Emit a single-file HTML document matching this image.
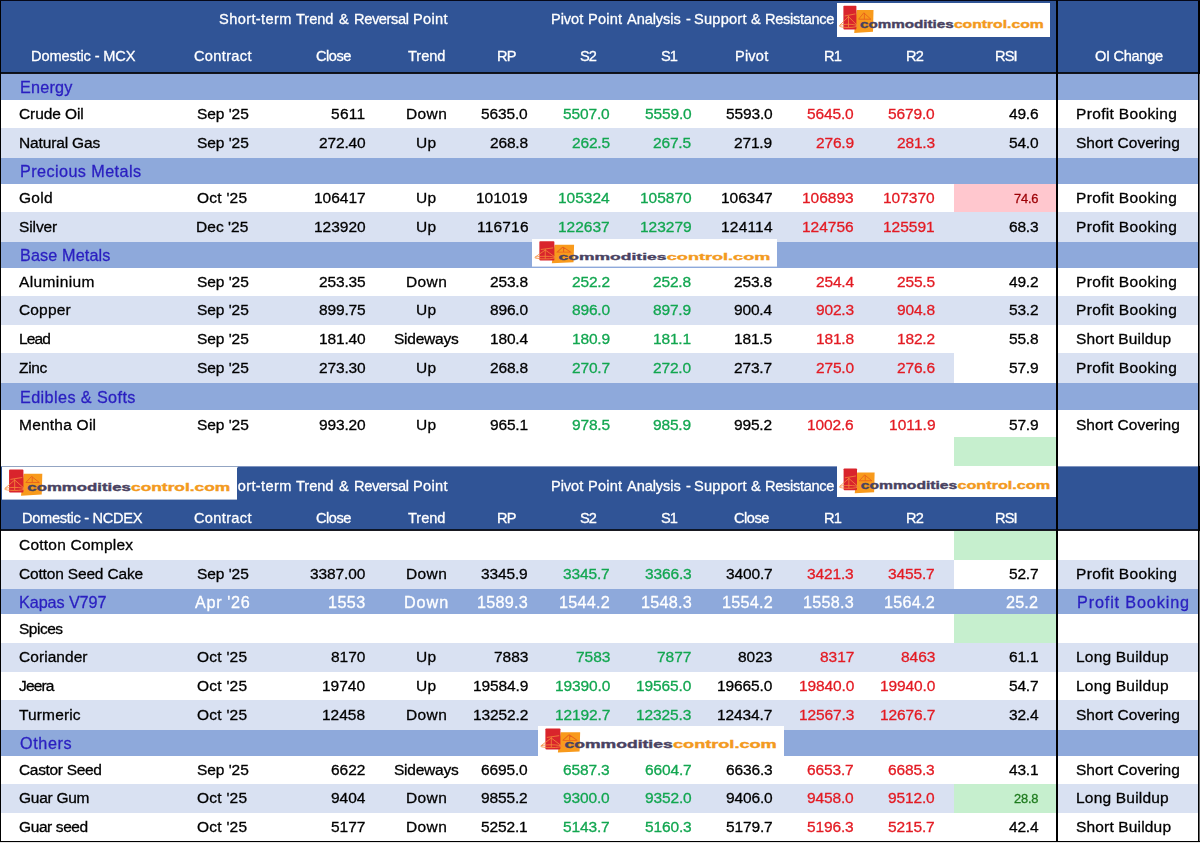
<!DOCTYPE html>
<html><head><meta charset="utf-8"><title>Commodities Technical Levels</title>
<style>
html,body{margin:0;padding:0;background:#fff}
body{width:1200px;height:843px;position:relative;overflow:hidden;font-family:"Liberation Sans",sans-serif}
.b{position:absolute;display:block}
.t{position:absolute;white-space:pre;display:block;will-change:transform;-webkit-text-stroke:0.3px currentColor}
</style></head><body>
<div class="b" style="left:0px;top:0px;width:1200px;height:73px;background:#305496"></div>
<div class="b" style="left:0px;top:74px;width:1200px;height:26px;background:#8EA9DB"></div>
<span class="t" style="left:19.50px;top:74.3px;height:26px;line-height:26px;font-size:16.2px;color:#2A1FC0;letter-spacing:0.216px">Energy</span>
<div class="b" style="left:0px;top:100px;width:1200px;height:28.3px;background:#FFFFFF"></div>
<span class="t" style="left:19.00px;top:100px;height:28.3px;line-height:28.3px;font-size:15.5px;color:#000000;letter-spacing:-0.090px">Crude Oil</span>
<span class="t" style="left:196.62px;top:100px;height:28.3px;line-height:28.3px;font-size:15.5px;color:#000000;letter-spacing:-0.053px">Sep &#x27;25</span>
<span class="t" style="left:331.10px;top:100px;height:28.3px;line-height:28.3px;font-size:15.5px;color:#000000;letter-spacing:0.291px">5611</span>
<span class="t" style="left:405.59px;top:100px;height:28.3px;line-height:28.3px;font-size:15.5px;color:#000000;letter-spacing:0.397px">Down</span>
<span class="t" style="left:481.37px;top:100px;height:28.3px;line-height:28.3px;font-size:15.5px;color:#000000;letter-spacing:-0.136px">5635.0</span>
<span class="t" style="left:563.37px;top:100px;height:28.3px;line-height:28.3px;font-size:15.5px;color:#12A650;letter-spacing:-0.136px">5507.0</span>
<span class="t" style="left:644.87px;top:100px;height:28.3px;line-height:28.3px;font-size:15.5px;color:#12A650;letter-spacing:-0.136px">5559.0</span>
<span class="t" style="left:725.87px;top:100px;height:28.3px;line-height:28.3px;font-size:15.5px;color:#000000;letter-spacing:-0.136px">5593.0</span>
<span class="t" style="left:807.37px;top:100px;height:28.3px;line-height:28.3px;font-size:15.5px;color:#E31B23;letter-spacing:-0.136px">5645.0</span>
<span class="t" style="left:888.37px;top:100px;height:28.3px;line-height:28.3px;font-size:15.5px;color:#E31B23;letter-spacing:-0.136px">5679.0</span>
<span class="t" style="left:1008.85px;top:100px;height:28.3px;line-height:28.3px;font-size:15.5px;color:#000000;letter-spacing:-0.206px">49.6</span>
<span class="t" style="left:1076.40px;top:100px;height:28.3px;line-height:28.3px;font-size:15.5px;color:#000000;letter-spacing:0.338px">Profit Booking</span>
<div class="b" style="left:0px;top:128.3px;width:1200px;height:29.5px;background:#D9E1F2"></div>
<span class="t" style="left:19.00px;top:127.9px;height:29.5px;line-height:29.5px;font-size:15.5px;color:#000000;letter-spacing:-0.144px">Natural Gas</span>
<span class="t" style="left:196.62px;top:127.9px;height:29.5px;line-height:29.5px;font-size:15.5px;color:#000000;letter-spacing:-0.053px">Sep &#x27;25</span>
<span class="t" style="left:318.57px;top:127.9px;height:29.5px;line-height:29.5px;font-size:15.5px;color:#000000;letter-spacing:-0.136px">272.40</span>
<span class="t" style="left:415.95px;top:127.9px;height:29.5px;line-height:29.5px;font-size:15.5px;color:#000000;letter-spacing:0.293px">Up</span>
<span class="t" style="left:489.97px;top:127.9px;height:29.5px;line-height:29.5px;font-size:15.5px;color:#000000;letter-spacing:-0.164px">268.8</span>
<span class="t" style="left:571.97px;top:127.9px;height:29.5px;line-height:29.5px;font-size:15.5px;color:#12A650;letter-spacing:-0.164px">262.5</span>
<span class="t" style="left:653.47px;top:127.9px;height:29.5px;line-height:29.5px;font-size:15.5px;color:#12A650;letter-spacing:-0.164px">267.5</span>
<span class="t" style="left:734.47px;top:127.9px;height:29.5px;line-height:29.5px;font-size:15.5px;color:#000000;letter-spacing:-0.164px">271.9</span>
<span class="t" style="left:815.97px;top:127.9px;height:29.5px;line-height:29.5px;font-size:15.5px;color:#E31B23;letter-spacing:-0.164px">276.9</span>
<span class="t" style="left:896.97px;top:127.9px;height:29.5px;line-height:29.5px;font-size:15.5px;color:#E31B23;letter-spacing:-0.164px">281.3</span>
<span class="t" style="left:1008.85px;top:127.9px;height:29.5px;line-height:29.5px;font-size:15.5px;color:#000000;letter-spacing:-0.206px">54.0</span>
<span class="t" style="left:1076.40px;top:127.9px;height:29.5px;line-height:29.5px;font-size:15.5px;color:#000000;letter-spacing:0.032px">Short Covering</span>
<div class="b" style="left:0px;top:157.8px;width:1200px;height:26.2px;background:#8EA9DB"></div>
<span class="t" style="left:19.50px;top:158.1px;height:26.2px;line-height:26.2px;font-size:16.2px;color:#2A1FC0;letter-spacing:0.418px">Precious Metals</span>
<div class="b" style="left:0px;top:184px;width:1200px;height:28.4px;background:#FFFFFF"></div>
<div class="b" style="left:954px;top:184px;width:102px;height:28.4px;background:#FFC7CE"></div>
<span class="t" style="left:19.00px;top:184px;height:28.4px;line-height:28.4px;font-size:15.5px;color:#000000;letter-spacing:0.255px">Gold</span>
<span class="t" style="left:197.46px;top:184px;height:28.4px;line-height:28.4px;font-size:15.5px;color:#000000;letter-spacing:0.243px">Oct &#x27;25</span>
<span class="t" style="left:313.56px;top:184px;height:28.4px;line-height:28.4px;font-size:15.5px;color:#000000;letter-spacing:0.004px">106417</span>
<span class="t" style="left:415.95px;top:184px;height:28.4px;line-height:28.4px;font-size:15.5px;color:#000000;letter-spacing:0.293px">Up</span>
<span class="t" style="left:476.36px;top:184px;height:28.4px;line-height:28.4px;font-size:15.5px;color:#000000;letter-spacing:0.004px">101019</span>
<span class="t" style="left:558.36px;top:184px;height:28.4px;line-height:28.4px;font-size:15.5px;color:#12A650;letter-spacing:0.004px">105324</span>
<span class="t" style="left:639.86px;top:184px;height:28.4px;line-height:28.4px;font-size:15.5px;color:#12A650;letter-spacing:0.004px">105870</span>
<span class="t" style="left:720.86px;top:184px;height:28.4px;line-height:28.4px;font-size:15.5px;color:#000000;letter-spacing:0.004px">106347</span>
<span class="t" style="left:802.36px;top:184px;height:28.4px;line-height:28.4px;font-size:15.5px;color:#E31B23;letter-spacing:0.004px">106893</span>
<span class="t" style="left:883.36px;top:184px;height:28.4px;line-height:28.4px;font-size:15.5px;color:#E31B23;letter-spacing:0.004px">107370</span>
<span class="t" style="left:1013.97px;top:184.5px;height:28.4px;line-height:28.4px;font-size:12.9px;color:#9C0006;letter-spacing:-0.225px">74.6</span>
<span class="t" style="left:1076.40px;top:184px;height:28.4px;line-height:28.4px;font-size:15.5px;color:#000000;letter-spacing:0.338px">Profit Booking</span>
<div class="b" style="left:0px;top:212.4px;width:1200px;height:29.2px;background:#D9E1F2"></div>
<span class="t" style="left:19.00px;top:212.4px;height:29.2px;line-height:29.2px;font-size:15.5px;color:#000000;letter-spacing:-0.103px">Silver</span>
<span class="t" style="left:196.32px;top:212.4px;height:29.2px;line-height:29.2px;font-size:15.5px;color:#000000;letter-spacing:0.049px">Dec &#x27;25</span>
<span class="t" style="left:313.56px;top:212.4px;height:29.2px;line-height:29.2px;font-size:15.5px;color:#000000;letter-spacing:0.004px">123920</span>
<span class="t" style="left:415.95px;top:212.4px;height:29.2px;line-height:29.2px;font-size:15.5px;color:#000000;letter-spacing:0.293px">Up</span>
<span class="t" style="left:476.55px;top:212.4px;height:29.2px;line-height:29.2px;font-size:15.5px;color:#000000;letter-spacing:0.195px">116716</span>
<span class="t" style="left:558.36px;top:212.4px;height:29.2px;line-height:29.2px;font-size:15.5px;color:#12A650;letter-spacing:0.004px">122637</span>
<span class="t" style="left:639.86px;top:212.4px;height:29.2px;line-height:29.2px;font-size:15.5px;color:#12A650;letter-spacing:0.004px">123279</span>
<span class="t" style="left:721.05px;top:212.4px;height:29.2px;line-height:29.2px;font-size:15.5px;color:#000000;letter-spacing:0.195px">124114</span>
<span class="t" style="left:802.36px;top:212.4px;height:29.2px;line-height:29.2px;font-size:15.5px;color:#E31B23;letter-spacing:0.004px">124756</span>
<span class="t" style="left:883.36px;top:212.4px;height:29.2px;line-height:29.2px;font-size:15.5px;color:#E31B23;letter-spacing:0.004px">125591</span>
<span class="t" style="left:1008.85px;top:212.4px;height:29.2px;line-height:29.2px;font-size:15.5px;color:#000000;letter-spacing:-0.206px">68.3</span>
<span class="t" style="left:1076.40px;top:212.4px;height:29.2px;line-height:29.2px;font-size:15.5px;color:#000000;letter-spacing:0.338px">Profit Booking</span>
<div class="b" style="left:0px;top:241.6px;width:1200px;height:26px;background:#8EA9DB"></div>
<span class="t" style="left:19.50px;top:241.9px;height:26px;line-height:26px;font-size:16.2px;color:#2A1FC0;letter-spacing:0.137px">Base Metals</span>
<div class="b" style="left:0px;top:267.6px;width:1200px;height:28.8px;background:#FFFFFF"></div>
<span class="t" style="left:19.00px;top:267.6px;height:28.8px;line-height:28.8px;font-size:15.5px;color:#000000;letter-spacing:0.381px">Aluminium</span>
<span class="t" style="left:196.62px;top:267.6px;height:28.8px;line-height:28.8px;font-size:15.5px;color:#000000;letter-spacing:-0.053px">Sep &#x27;25</span>
<span class="t" style="left:318.57px;top:267.6px;height:28.8px;line-height:28.8px;font-size:15.5px;color:#000000;letter-spacing:-0.136px">253.35</span>
<span class="t" style="left:405.59px;top:267.6px;height:28.8px;line-height:28.8px;font-size:15.5px;color:#000000;letter-spacing:0.397px">Down</span>
<span class="t" style="left:489.97px;top:267.6px;height:28.8px;line-height:28.8px;font-size:15.5px;color:#000000;letter-spacing:-0.164px">253.8</span>
<span class="t" style="left:571.97px;top:267.6px;height:28.8px;line-height:28.8px;font-size:15.5px;color:#12A650;letter-spacing:-0.164px">252.2</span>
<span class="t" style="left:653.47px;top:267.6px;height:28.8px;line-height:28.8px;font-size:15.5px;color:#12A650;letter-spacing:-0.164px">252.8</span>
<span class="t" style="left:734.47px;top:267.6px;height:28.8px;line-height:28.8px;font-size:15.5px;color:#000000;letter-spacing:-0.164px">253.8</span>
<span class="t" style="left:815.97px;top:267.6px;height:28.8px;line-height:28.8px;font-size:15.5px;color:#E31B23;letter-spacing:-0.164px">254.4</span>
<span class="t" style="left:896.97px;top:267.6px;height:28.8px;line-height:28.8px;font-size:15.5px;color:#E31B23;letter-spacing:-0.164px">255.5</span>
<span class="t" style="left:1008.85px;top:267.6px;height:28.8px;line-height:28.8px;font-size:15.5px;color:#000000;letter-spacing:-0.206px">49.2</span>
<span class="t" style="left:1076.40px;top:267.6px;height:28.8px;line-height:28.8px;font-size:15.5px;color:#000000;letter-spacing:0.338px">Profit Booking</span>
<div class="b" style="left:0px;top:296.4px;width:1200px;height:28.6px;background:#D9E1F2"></div>
<span class="t" style="left:19.00px;top:296.4px;height:28.6px;line-height:28.6px;font-size:15.5px;color:#000000;letter-spacing:0.152px">Copper</span>
<span class="t" style="left:196.62px;top:296.4px;height:28.6px;line-height:28.6px;font-size:15.5px;color:#000000;letter-spacing:-0.053px">Sep &#x27;25</span>
<span class="t" style="left:318.57px;top:296.4px;height:28.6px;line-height:28.6px;font-size:15.5px;color:#000000;letter-spacing:-0.136px">899.75</span>
<span class="t" style="left:415.95px;top:296.4px;height:28.6px;line-height:28.6px;font-size:15.5px;color:#000000;letter-spacing:0.293px">Up</span>
<span class="t" style="left:489.97px;top:296.4px;height:28.6px;line-height:28.6px;font-size:15.5px;color:#000000;letter-spacing:-0.164px">896.0</span>
<span class="t" style="left:571.97px;top:296.4px;height:28.6px;line-height:28.6px;font-size:15.5px;color:#12A650;letter-spacing:-0.164px">896.0</span>
<span class="t" style="left:653.47px;top:296.4px;height:28.6px;line-height:28.6px;font-size:15.5px;color:#12A650;letter-spacing:-0.164px">897.9</span>
<span class="t" style="left:734.47px;top:296.4px;height:28.6px;line-height:28.6px;font-size:15.5px;color:#000000;letter-spacing:-0.164px">900.4</span>
<span class="t" style="left:815.97px;top:296.4px;height:28.6px;line-height:28.6px;font-size:15.5px;color:#E31B23;letter-spacing:-0.164px">902.3</span>
<span class="t" style="left:896.97px;top:296.4px;height:28.6px;line-height:28.6px;font-size:15.5px;color:#E31B23;letter-spacing:-0.164px">904.8</span>
<span class="t" style="left:1008.85px;top:296.4px;height:28.6px;line-height:28.6px;font-size:15.5px;color:#000000;letter-spacing:-0.206px">53.2</span>
<span class="t" style="left:1076.40px;top:296.4px;height:28.6px;line-height:28.6px;font-size:15.5px;color:#000000;letter-spacing:0.338px">Profit Booking</span>
<div class="b" style="left:0px;top:325px;width:1200px;height:28.4px;background:#FFFFFF"></div>
<span class="t" style="left:18.91px;top:325px;height:28.4px;line-height:28.4px;font-size:15.5px;color:#000000;letter-spacing:-0.900px">Lead</span>
<span class="t" style="left:196.62px;top:325px;height:28.4px;line-height:28.4px;font-size:15.5px;color:#000000;letter-spacing:-0.053px">Sep &#x27;25</span>
<span class="t" style="left:318.57px;top:325px;height:28.4px;line-height:28.4px;font-size:15.5px;color:#000000;letter-spacing:-0.136px">181.40</span>
<span class="t" style="left:393.68px;top:325px;height:28.4px;line-height:28.4px;font-size:15.5px;color:#000000;letter-spacing:-0.242px">Sideways</span>
<span class="t" style="left:489.97px;top:325px;height:28.4px;line-height:28.4px;font-size:15.5px;color:#000000;letter-spacing:-0.164px">180.4</span>
<span class="t" style="left:571.97px;top:325px;height:28.4px;line-height:28.4px;font-size:15.5px;color:#12A650;letter-spacing:-0.164px">180.9</span>
<span class="t" style="left:653.47px;top:325px;height:28.4px;line-height:28.4px;font-size:15.5px;color:#12A650;letter-spacing:-0.164px">181.1</span>
<span class="t" style="left:734.47px;top:325px;height:28.4px;line-height:28.4px;font-size:15.5px;color:#000000;letter-spacing:-0.164px">181.5</span>
<span class="t" style="left:815.97px;top:325px;height:28.4px;line-height:28.4px;font-size:15.5px;color:#E31B23;letter-spacing:-0.164px">181.8</span>
<span class="t" style="left:896.97px;top:325px;height:28.4px;line-height:28.4px;font-size:15.5px;color:#E31B23;letter-spacing:-0.164px">182.2</span>
<span class="t" style="left:1008.85px;top:325px;height:28.4px;line-height:28.4px;font-size:15.5px;color:#000000;letter-spacing:-0.206px">55.8</span>
<span class="t" style="left:1076.40px;top:325px;height:28.4px;line-height:28.4px;font-size:15.5px;color:#000000;letter-spacing:0.162px">Short Buildup</span>
<div class="b" style="left:0px;top:353.3px;width:1200px;height:29.6px;background:#D9E1F2"></div>
<div class="b" style="left:954px;top:353.3px;width:102px;height:29.6px;background:#FFFFFF"></div>
<span class="t" style="left:19.00px;top:353.3px;height:29.6px;line-height:29.6px;font-size:15.5px;color:#000000;letter-spacing:-0.343px">Zinc</span>
<span class="t" style="left:196.62px;top:353.3px;height:29.6px;line-height:29.6px;font-size:15.5px;color:#000000;letter-spacing:-0.053px">Sep &#x27;25</span>
<span class="t" style="left:318.57px;top:353.3px;height:29.6px;line-height:29.6px;font-size:15.5px;color:#000000;letter-spacing:-0.136px">273.30</span>
<span class="t" style="left:415.95px;top:353.3px;height:29.6px;line-height:29.6px;font-size:15.5px;color:#000000;letter-spacing:0.293px">Up</span>
<span class="t" style="left:489.97px;top:353.3px;height:29.6px;line-height:29.6px;font-size:15.5px;color:#000000;letter-spacing:-0.164px">268.8</span>
<span class="t" style="left:571.97px;top:353.3px;height:29.6px;line-height:29.6px;font-size:15.5px;color:#12A650;letter-spacing:-0.164px">270.7</span>
<span class="t" style="left:653.47px;top:353.3px;height:29.6px;line-height:29.6px;font-size:15.5px;color:#12A650;letter-spacing:-0.164px">272.0</span>
<span class="t" style="left:734.47px;top:353.3px;height:29.6px;line-height:29.6px;font-size:15.5px;color:#000000;letter-spacing:-0.164px">273.7</span>
<span class="t" style="left:815.97px;top:353.3px;height:29.6px;line-height:29.6px;font-size:15.5px;color:#E31B23;letter-spacing:-0.164px">275.0</span>
<span class="t" style="left:896.97px;top:353.3px;height:29.6px;line-height:29.6px;font-size:15.5px;color:#E31B23;letter-spacing:-0.164px">276.6</span>
<span class="t" style="left:1008.85px;top:353.3px;height:29.6px;line-height:29.6px;font-size:15.5px;color:#000000;letter-spacing:-0.206px">57.9</span>
<span class="t" style="left:1076.40px;top:353.3px;height:29.6px;line-height:29.6px;font-size:15.5px;color:#000000;letter-spacing:0.338px">Profit Booking</span>
<div class="b" style="left:0px;top:382.9px;width:1200px;height:27.3px;background:#8EA9DB"></div>
<span class="t" style="left:19.50px;top:383.8px;height:27.3px;line-height:27.3px;font-size:16.2px;color:#2A1FC0;letter-spacing:0.403px">Edibles &amp; Softs</span>
<div class="b" style="left:0px;top:410.2px;width:1200px;height:27px;background:#FFFFFF"></div>
<span class="t" style="left:19.00px;top:411.2px;height:27px;line-height:27px;font-size:15.5px;color:#000000;letter-spacing:0.229px">Mentha Oil</span>
<span class="t" style="left:196.62px;top:411.2px;height:27px;line-height:27px;font-size:15.5px;color:#000000;letter-spacing:-0.053px">Sep &#x27;25</span>
<span class="t" style="left:318.57px;top:411.2px;height:27px;line-height:27px;font-size:15.5px;color:#000000;letter-spacing:-0.136px">993.20</span>
<span class="t" style="left:415.95px;top:411.2px;height:27px;line-height:27px;font-size:15.5px;color:#000000;letter-spacing:0.293px">Up</span>
<span class="t" style="left:489.97px;top:411.2px;height:27px;line-height:27px;font-size:15.5px;color:#000000;letter-spacing:-0.164px">965.1</span>
<span class="t" style="left:571.97px;top:411.2px;height:27px;line-height:27px;font-size:15.5px;color:#12A650;letter-spacing:-0.164px">978.5</span>
<span class="t" style="left:653.47px;top:411.2px;height:27px;line-height:27px;font-size:15.5px;color:#12A650;letter-spacing:-0.164px">985.9</span>
<span class="t" style="left:734.47px;top:411.2px;height:27px;line-height:27px;font-size:15.5px;color:#000000;letter-spacing:-0.164px">995.2</span>
<span class="t" style="left:807.37px;top:411.2px;height:27px;line-height:27px;font-size:15.5px;color:#E31B23;letter-spacing:-0.136px">1002.6</span>
<span class="t" style="left:888.56px;top:411.2px;height:27px;line-height:27px;font-size:15.5px;color:#E31B23;letter-spacing:0.056px">1011.9</span>
<span class="t" style="left:1008.85px;top:411.2px;height:27px;line-height:27px;font-size:15.5px;color:#000000;letter-spacing:-0.206px">57.9</span>
<span class="t" style="left:1076.40px;top:411.2px;height:27px;line-height:27px;font-size:15.5px;color:#000000;letter-spacing:0.032px">Short Covering</span>
<div class="b" style="left:0px;top:437.2px;width:1200px;height:29.2px;background:#FFFFFF"></div>
<div class="b" style="left:954px;top:437.2px;width:102px;height:29.2px;background:#C6EFCE"></div>
<div class="b" style="left:0px;top:466.4px;width:1200px;height:63.6px;background:#305496"></div>
<div class="b" style="left:0px;top:466px;width:1200px;height:1px;background:#7E93BF"></div>
<div class="b" style="left:0px;top:530.5px;width:1200px;height:29.4px;background:#FFFFFF"></div>
<div class="b" style="left:954px;top:530.5px;width:102px;height:29.4px;background:#C6EFCE"></div>
<span class="t" style="left:19.00px;top:529.6px;height:29.4px;line-height:29.4px;font-size:15.5px;color:#000;letter-spacing:0.228px">Cotton Complex</span>
<div class="b" style="left:0px;top:559.9px;width:1200px;height:29px;background:#D9E1F2"></div>
<div class="b" style="left:954px;top:559.9px;width:102px;height:29px;background:#FFFFFF"></div>
<span class="t" style="left:19.00px;top:558.9px;height:29px;line-height:29px;font-size:15.5px;color:#000000;letter-spacing:-0.171px">Cotton Seed Cake</span>
<span class="t" style="left:196.62px;top:558.9px;height:29px;line-height:29px;font-size:15.5px;color:#000000;letter-spacing:-0.053px">Sep &#x27;25</span>
<span class="t" style="left:309.97px;top:558.9px;height:29px;line-height:29px;font-size:15.5px;color:#000000;letter-spacing:-0.116px">3387.00</span>
<span class="t" style="left:405.59px;top:558.9px;height:29px;line-height:29px;font-size:15.5px;color:#000000;letter-spacing:0.397px">Down</span>
<span class="t" style="left:481.37px;top:558.9px;height:29px;line-height:29px;font-size:15.5px;color:#000000;letter-spacing:-0.136px">3345.9</span>
<span class="t" style="left:563.37px;top:558.9px;height:29px;line-height:29px;font-size:15.5px;color:#12A650;letter-spacing:-0.136px">3345.7</span>
<span class="t" style="left:644.87px;top:558.9px;height:29px;line-height:29px;font-size:15.5px;color:#12A650;letter-spacing:-0.136px">3366.3</span>
<span class="t" style="left:725.87px;top:558.9px;height:29px;line-height:29px;font-size:15.5px;color:#000000;letter-spacing:-0.136px">3400.7</span>
<span class="t" style="left:807.37px;top:558.9px;height:29px;line-height:29px;font-size:15.5px;color:#E31B23;letter-spacing:-0.136px">3421.3</span>
<span class="t" style="left:888.37px;top:558.9px;height:29px;line-height:29px;font-size:15.5px;color:#E31B23;letter-spacing:-0.136px">3455.7</span>
<span class="t" style="left:1008.85px;top:558.9px;height:29px;line-height:29px;font-size:15.5px;color:#000000;letter-spacing:-0.206px">52.7</span>
<span class="t" style="left:1076.40px;top:558.9px;height:29px;line-height:29px;font-size:15.5px;color:#000000;letter-spacing:0.338px">Profit Booking</span>
<div class="b" style="left:0px;top:588.9px;width:1200px;height:25.2px;background:#8EA9DB"></div>
<span class="t" style="left:19.40px;top:589.7px;height:25.2px;line-height:25.2px;font-size:16.2px;color:#2A1FC0;letter-spacing:-0.086px">Kapas V797</span>
<span class="t" style="left:195.09px;top:589.7px;height:25.2px;line-height:25.2px;font-size:16.2px;color:#FFFFFF;letter-spacing:0.667px">Apr &#x27;26</span>
<span class="t" style="left:327.99px;top:589.7px;height:25.2px;line-height:25.2px;font-size:16.2px;color:#FFFFFF;letter-spacing:0.423px">1553</span>
<span class="t" style="left:403.92px;top:589.7px;height:25.2px;line-height:25.2px;font-size:16.2px;color:#FFFFFF;letter-spacing:0.916px">Down</span>
<span class="t" style="left:477.38px;top:589.7px;height:25.2px;line-height:25.2px;font-size:16.2px;color:#FFFFFF;letter-spacing:0.235px">1589.3</span>
<span class="t" style="left:559.38px;top:589.7px;height:25.2px;line-height:25.2px;font-size:16.2px;color:#FFFFFF;letter-spacing:0.235px">1544.2</span>
<span class="t" style="left:640.88px;top:589.7px;height:25.2px;line-height:25.2px;font-size:16.2px;color:#FFFFFF;letter-spacing:0.235px">1548.3</span>
<span class="t" style="left:721.88px;top:589.7px;height:25.2px;line-height:25.2px;font-size:16.2px;color:#FFFFFF;letter-spacing:0.235px">1554.2</span>
<span class="t" style="left:803.38px;top:589.7px;height:25.2px;line-height:25.2px;font-size:16.2px;color:#FFFFFF;letter-spacing:0.235px">1558.3</span>
<span class="t" style="left:884.38px;top:589.7px;height:25.2px;line-height:25.2px;font-size:16.2px;color:#FFFFFF;letter-spacing:0.235px">1564.2</span>
<span class="t" style="left:1006.45px;top:589.7px;height:25.2px;line-height:25.2px;font-size:16.2px;color:#FFFFFF;letter-spacing:0.141px">25.2</span>
<span class="t" style="left:1076.80px;top:589.7px;height:25.2px;line-height:25.2px;font-size:16.2px;color:#2A1FC0;letter-spacing:0.865px">Profit Booking</span>
<div class="b" style="left:0px;top:614.1px;width:1200px;height:28.9px;background:#FFFFFF"></div>
<div class="b" style="left:954px;top:614.1px;width:102px;height:28.9px;background:#C6EFCE"></div>
<span class="t" style="left:19.00px;top:614.9px;height:28.9px;line-height:28.9px;font-size:15.5px;color:#000;letter-spacing:-0.483px">Spices</span>
<div class="b" style="left:0px;top:643px;width:1200px;height:28.6px;background:#D9E1F2"></div>
<span class="t" style="left:19.00px;top:643px;height:28.6px;line-height:28.6px;font-size:15.5px;color:#000000;letter-spacing:0.055px">Coriander</span>
<span class="t" style="left:197.46px;top:643px;height:28.6px;line-height:28.6px;font-size:15.5px;color:#000000;letter-spacing:0.243px">Oct &#x27;25</span>
<span class="t" style="left:330.81px;top:643px;height:28.6px;line-height:28.6px;font-size:15.5px;color:#000000;letter-spacing:0.004px">8170</span>
<span class="t" style="left:415.95px;top:643px;height:28.6px;line-height:28.6px;font-size:15.5px;color:#000000;letter-spacing:0.293px">Up</span>
<span class="t" style="left:493.61px;top:643px;height:28.6px;line-height:28.6px;font-size:15.5px;color:#000000;letter-spacing:0.004px">7883</span>
<span class="t" style="left:575.61px;top:643px;height:28.6px;line-height:28.6px;font-size:15.5px;color:#12A650;letter-spacing:0.004px">7583</span>
<span class="t" style="left:657.11px;top:643px;height:28.6px;line-height:28.6px;font-size:15.5px;color:#12A650;letter-spacing:0.004px">7877</span>
<span class="t" style="left:738.11px;top:643px;height:28.6px;line-height:28.6px;font-size:15.5px;color:#000000;letter-spacing:0.004px">8023</span>
<span class="t" style="left:819.61px;top:643px;height:28.6px;line-height:28.6px;font-size:15.5px;color:#E31B23;letter-spacing:0.004px">8317</span>
<span class="t" style="left:900.61px;top:643px;height:28.6px;line-height:28.6px;font-size:15.5px;color:#E31B23;letter-spacing:0.004px">8463</span>
<span class="t" style="left:1008.85px;top:643px;height:28.6px;line-height:28.6px;font-size:15.5px;color:#000000;letter-spacing:-0.206px">61.1</span>
<span class="t" style="left:1076.40px;top:643px;height:28.6px;line-height:28.6px;font-size:15.5px;color:#000000;letter-spacing:0.201px">Long Buildup</span>
<div class="b" style="left:0px;top:671.6px;width:1200px;height:28.4px;background:#FFFFFF"></div>
<span class="t" style="left:19.00px;top:671.6px;height:28.4px;line-height:28.4px;font-size:15.5px;color:#000000;letter-spacing:-0.845px">Jeera</span>
<span class="t" style="left:197.46px;top:671.6px;height:28.4px;line-height:28.4px;font-size:15.5px;color:#000000;letter-spacing:0.243px">Oct &#x27;25</span>
<span class="t" style="left:322.18px;top:671.6px;height:28.4px;line-height:28.4px;font-size:15.5px;color:#000000;letter-spacing:0.004px">19740</span>
<span class="t" style="left:415.95px;top:671.6px;height:28.4px;line-height:28.4px;font-size:15.5px;color:#000000;letter-spacing:0.293px">Up</span>
<span class="t" style="left:472.77px;top:671.6px;height:28.4px;line-height:28.4px;font-size:15.5px;color:#000000;letter-spacing:-0.116px">19584.9</span>
<span class="t" style="left:554.77px;top:671.6px;height:28.4px;line-height:28.4px;font-size:15.5px;color:#12A650;letter-spacing:-0.116px">19390.0</span>
<span class="t" style="left:636.27px;top:671.6px;height:28.4px;line-height:28.4px;font-size:15.5px;color:#12A650;letter-spacing:-0.116px">19565.0</span>
<span class="t" style="left:717.27px;top:671.6px;height:28.4px;line-height:28.4px;font-size:15.5px;color:#000000;letter-spacing:-0.116px">19665.0</span>
<span class="t" style="left:798.77px;top:671.6px;height:28.4px;line-height:28.4px;font-size:15.5px;color:#E31B23;letter-spacing:-0.116px">19840.0</span>
<span class="t" style="left:879.77px;top:671.6px;height:28.4px;line-height:28.4px;font-size:15.5px;color:#E31B23;letter-spacing:-0.116px">19940.0</span>
<span class="t" style="left:1008.85px;top:671.6px;height:28.4px;line-height:28.4px;font-size:15.5px;color:#000000;letter-spacing:-0.206px">54.7</span>
<span class="t" style="left:1076.40px;top:671.6px;height:28.4px;line-height:28.4px;font-size:15.5px;color:#000000;letter-spacing:0.201px">Long Buildup</span>
<div class="b" style="left:0px;top:700px;width:1200px;height:30px;background:#D9E1F2"></div>
<span class="t" style="left:19.00px;top:700px;height:30px;line-height:30px;font-size:15.5px;color:#000000;letter-spacing:0.149px">Turmeric</span>
<span class="t" style="left:197.46px;top:700px;height:30px;line-height:30px;font-size:15.5px;color:#000000;letter-spacing:0.243px">Oct &#x27;25</span>
<span class="t" style="left:322.18px;top:700px;height:30px;line-height:30px;font-size:15.5px;color:#000000;letter-spacing:0.004px">12458</span>
<span class="t" style="left:405.59px;top:700px;height:30px;line-height:30px;font-size:15.5px;color:#000000;letter-spacing:0.397px">Down</span>
<span class="t" style="left:472.77px;top:700px;height:30px;line-height:30px;font-size:15.5px;color:#000000;letter-spacing:-0.116px">13252.2</span>
<span class="t" style="left:554.77px;top:700px;height:30px;line-height:30px;font-size:15.5px;color:#12A650;letter-spacing:-0.116px">12192.7</span>
<span class="t" style="left:636.27px;top:700px;height:30px;line-height:30px;font-size:15.5px;color:#12A650;letter-spacing:-0.116px">12325.3</span>
<span class="t" style="left:717.27px;top:700px;height:30px;line-height:30px;font-size:15.5px;color:#000000;letter-spacing:-0.116px">12434.7</span>
<span class="t" style="left:798.77px;top:700px;height:30px;line-height:30px;font-size:15.5px;color:#E31B23;letter-spacing:-0.116px">12567.3</span>
<span class="t" style="left:879.77px;top:700px;height:30px;line-height:30px;font-size:15.5px;color:#E31B23;letter-spacing:-0.116px">12676.7</span>
<span class="t" style="left:1008.85px;top:700px;height:30px;line-height:30px;font-size:15.5px;color:#000000;letter-spacing:-0.206px">32.4</span>
<span class="t" style="left:1076.40px;top:700px;height:30px;line-height:30px;font-size:15.5px;color:#000000;letter-spacing:0.032px">Short Covering</span>
<div class="b" style="left:0px;top:730px;width:1200px;height:25.5px;background:#8EA9DB"></div>
<span class="t" style="left:19.50px;top:731.1px;height:25.5px;line-height:25.5px;font-size:16.2px;color:#2A1FC0;letter-spacing:0.627px">Others</span>
<div class="b" style="left:0px;top:755.5px;width:1200px;height:28.9px;background:#FFFFFF"></div>
<span class="t" style="left:19.00px;top:755.5px;height:28.9px;line-height:28.9px;font-size:15.5px;color:#000000;letter-spacing:-0.326px">Castor Seed</span>
<span class="t" style="left:196.62px;top:755.5px;height:28.9px;line-height:28.9px;font-size:15.5px;color:#000000;letter-spacing:-0.053px">Sep &#x27;25</span>
<span class="t" style="left:330.81px;top:755.5px;height:28.9px;line-height:28.9px;font-size:15.5px;color:#000000;letter-spacing:0.004px">6622</span>
<span class="t" style="left:393.68px;top:755.5px;height:28.9px;line-height:28.9px;font-size:15.5px;color:#000000;letter-spacing:-0.242px">Sideways</span>
<span class="t" style="left:481.37px;top:755.5px;height:28.9px;line-height:28.9px;font-size:15.5px;color:#000000;letter-spacing:-0.136px">6695.0</span>
<span class="t" style="left:563.37px;top:755.5px;height:28.9px;line-height:28.9px;font-size:15.5px;color:#12A650;letter-spacing:-0.136px">6587.3</span>
<span class="t" style="left:644.87px;top:755.5px;height:28.9px;line-height:28.9px;font-size:15.5px;color:#12A650;letter-spacing:-0.136px">6604.7</span>
<span class="t" style="left:725.87px;top:755.5px;height:28.9px;line-height:28.9px;font-size:15.5px;color:#000000;letter-spacing:-0.136px">6636.3</span>
<span class="t" style="left:807.37px;top:755.5px;height:28.9px;line-height:28.9px;font-size:15.5px;color:#E31B23;letter-spacing:-0.136px">6653.7</span>
<span class="t" style="left:888.37px;top:755.5px;height:28.9px;line-height:28.9px;font-size:15.5px;color:#E31B23;letter-spacing:-0.136px">6685.3</span>
<span class="t" style="left:1008.85px;top:755.5px;height:28.9px;line-height:28.9px;font-size:15.5px;color:#000000;letter-spacing:-0.206px">43.1</span>
<span class="t" style="left:1076.40px;top:755.5px;height:28.9px;line-height:28.9px;font-size:15.5px;color:#000000;letter-spacing:0.032px">Short Covering</span>
<div class="b" style="left:0px;top:784.4px;width:1200px;height:28.6px;background:#D9E1F2"></div>
<div class="b" style="left:954px;top:784.4px;width:102px;height:28.6px;background:#C6EFCE"></div>
<span class="t" style="left:19.00px;top:784.4px;height:28.6px;line-height:28.6px;font-size:15.5px;color:#000000;letter-spacing:-0.265px">Guar Gum</span>
<span class="t" style="left:197.46px;top:784.4px;height:28.6px;line-height:28.6px;font-size:15.5px;color:#000000;letter-spacing:0.243px">Oct &#x27;25</span>
<span class="t" style="left:330.81px;top:784.4px;height:28.6px;line-height:28.6px;font-size:15.5px;color:#000000;letter-spacing:0.004px">9404</span>
<span class="t" style="left:405.59px;top:784.4px;height:28.6px;line-height:28.6px;font-size:15.5px;color:#000000;letter-spacing:0.397px">Down</span>
<span class="t" style="left:481.37px;top:784.4px;height:28.6px;line-height:28.6px;font-size:15.5px;color:#000000;letter-spacing:-0.136px">9855.2</span>
<span class="t" style="left:563.37px;top:784.4px;height:28.6px;line-height:28.6px;font-size:15.5px;color:#12A650;letter-spacing:-0.136px">9300.0</span>
<span class="t" style="left:644.87px;top:784.4px;height:28.6px;line-height:28.6px;font-size:15.5px;color:#12A650;letter-spacing:-0.136px">9352.0</span>
<span class="t" style="left:725.87px;top:784.4px;height:28.6px;line-height:28.6px;font-size:15.5px;color:#000000;letter-spacing:-0.136px">9406.0</span>
<span class="t" style="left:807.37px;top:784.4px;height:28.6px;line-height:28.6px;font-size:15.5px;color:#E31B23;letter-spacing:-0.136px">9458.0</span>
<span class="t" style="left:888.37px;top:784.4px;height:28.6px;line-height:28.6px;font-size:15.5px;color:#E31B23;letter-spacing:-0.136px">9512.0</span>
<span class="t" style="left:1013.97px;top:785.2px;height:28.6px;line-height:28.6px;font-size:12.9px;color:#1E7B1E;letter-spacing:-0.225px">28.8</span>
<span class="t" style="left:1076.40px;top:784.4px;height:28.6px;line-height:28.6px;font-size:15.5px;color:#000000;letter-spacing:0.201px">Long Buildup</span>
<div class="b" style="left:0px;top:813px;width:1200px;height:27.7px;background:#FFFFFF"></div>
<span class="t" style="left:19.00px;top:813px;height:27.7px;line-height:27.7px;font-size:15.5px;color:#000000;letter-spacing:-0.396px">Guar seed</span>
<span class="t" style="left:197.46px;top:813px;height:27.7px;line-height:27.7px;font-size:15.5px;color:#000000;letter-spacing:0.243px">Oct &#x27;25</span>
<span class="t" style="left:330.81px;top:813px;height:27.7px;line-height:27.7px;font-size:15.5px;color:#000000;letter-spacing:0.004px">5177</span>
<span class="t" style="left:405.59px;top:813px;height:27.7px;line-height:27.7px;font-size:15.5px;color:#000000;letter-spacing:0.397px">Down</span>
<span class="t" style="left:481.37px;top:813px;height:27.7px;line-height:27.7px;font-size:15.5px;color:#000000;letter-spacing:-0.136px">5252.1</span>
<span class="t" style="left:563.37px;top:813px;height:27.7px;line-height:27.7px;font-size:15.5px;color:#12A650;letter-spacing:-0.136px">5143.7</span>
<span class="t" style="left:644.87px;top:813px;height:27.7px;line-height:27.7px;font-size:15.5px;color:#12A650;letter-spacing:-0.136px">5160.3</span>
<span class="t" style="left:725.87px;top:813px;height:27.7px;line-height:27.7px;font-size:15.5px;color:#000000;letter-spacing:-0.136px">5179.7</span>
<span class="t" style="left:807.37px;top:813px;height:27.7px;line-height:27.7px;font-size:15.5px;color:#E31B23;letter-spacing:-0.136px">5196.3</span>
<span class="t" style="left:888.37px;top:813px;height:27.7px;line-height:27.7px;font-size:15.5px;color:#E31B23;letter-spacing:-0.136px">5215.7</span>
<span class="t" style="left:1008.85px;top:813px;height:27.7px;line-height:27.7px;font-size:15.5px;color:#000000;letter-spacing:-0.206px">42.4</span>
<span class="t" style="left:1076.40px;top:813px;height:27.7px;line-height:27.7px;font-size:15.5px;color:#000000;letter-spacing:0.162px">Short Buildup</span>
<span class="t" style="left:218.75px;top:9.3411px;height:20px;line-height:20px;font-size:14.6px;color:#FFFFFF;letter-spacing:0.394px">Short-term</span>
<span class="t" style="left:296.25px;top:9.3411px;height:20px;line-height:20px;font-size:14.6px;color:#FFFFFF;letter-spacing:-0.024px">Trend</span>
<span class="t" style="left:339.26px;top:9.3411px;height:20px;line-height:20px;font-size:14.6px;color:#FFFFFF;letter-spacing:1.012px">&amp;</span>
<span class="t" style="left:353.75px;top:9.3411px;height:20px;line-height:20px;font-size:14.6px;color:#FFFFFF;letter-spacing:-0.373px">Reversal</span>
<span class="t" style="left:413.00px;top:9.3411px;height:20px;line-height:20px;font-size:14.6px;color:#FFFFFF;letter-spacing:0.307px">Point</span>
<span class="t" style="left:550.75px;top:9.3411px;height:20px;line-height:20px;font-size:14.6px;color:#FFFFFF;letter-spacing:-0.051px">Pivot</span>
<span class="t" style="left:588.00px;top:9.3411px;height:20px;line-height:20px;font-size:14.6px;color:#FFFFFF;letter-spacing:0.182px">Point</span>
<span class="t" style="left:627.00px;top:9.3411px;height:20px;line-height:20px;font-size:14.6px;color:#FFFFFF;letter-spacing:-0.089px">Analysis</span>
<span class="t" style="left:685.57px;top:9.3411px;height:20px;line-height:20px;font-size:14.6px;color:#FFFFFF;letter-spacing:0.138px">-</span>
<span class="t" style="left:693.75px;top:9.3411px;height:20px;line-height:20px;font-size:14.6px;color:#FFFFFF;letter-spacing:0.228px">Support</span>
<span class="t" style="left:751.38px;top:9.3411px;height:20px;line-height:20px;font-size:14.6px;color:#FFFFFF;letter-spacing:0.262px">&amp;</span>
<span class="t" style="left:765.00px;top:9.3411px;height:20px;line-height:20px;font-size:14.6px;color:#FFFFFF;letter-spacing:-0.303px">Resistance</span>
<span class="t" style="left:30.50px;top:45.7411px;height:20px;line-height:20px;font-size:14.6px;color:#FFFFFF;letter-spacing:-0.135px">Domestic - MCX</span>
<span class="t" style="left:194.00px;top:45.7411px;height:20px;line-height:20px;font-size:14.6px;color:#FFFFFF;letter-spacing:0.332px">Contract</span>
<span class="t" style="left:315.75px;top:45.7411px;height:20px;line-height:20px;font-size:14.6px;color:#FFFFFF;letter-spacing:-0.458px">Close</span>
<span class="t" style="left:407.50px;top:45.7411px;height:20px;line-height:20px;font-size:14.6px;color:#FFFFFF;letter-spacing:-0.024px">Trend</span>
<span class="t" style="left:497.44px;top:45.7411px;height:20px;line-height:20px;font-size:14.6px;color:#FFFFFF;letter-spacing:-0.900px">RP</span>
<span class="t" style="left:579.90px;top:45.7411px;height:20px;line-height:20px;font-size:14.6px;color:#FFFFFF;letter-spacing:-0.900px">S2</span>
<span class="t" style="left:661.15px;top:45.7411px;height:20px;line-height:20px;font-size:14.6px;color:#FFFFFF;letter-spacing:-0.900px">S1</span>
<span class="t" style="left:735.00px;top:45.7411px;height:20px;line-height:20px;font-size:14.6px;color:#FFFFFF;letter-spacing:0.199px">Pivot</span>
<span class="t" style="left:824.12px;top:45.7411px;height:20px;line-height:20px;font-size:14.6px;color:#FFFFFF;letter-spacing:-0.900px">R1</span>
<span class="t" style="left:905.50px;top:45.7411px;height:20px;line-height:20px;font-size:14.6px;color:#FFFFFF;letter-spacing:-0.900px">R2</span>
<span class="t" style="left:995.23px;top:45.7411px;height:20px;line-height:20px;font-size:14.6px;color:#FFFFFF;letter-spacing:-0.900px">RSI</span>
<span class="t" style="left:1095.20px;top:45.7411px;height:20px;line-height:20px;font-size:14.6px;color:#FFFFFF;letter-spacing:-0.313px">OI Change</span>
<span class="t" style="left:218.75px;top:475.941px;height:20px;line-height:20px;font-size:14.6px;color:#FFFFFF;letter-spacing:0.394px">Short-term</span>
<span class="t" style="left:296.25px;top:475.941px;height:20px;line-height:20px;font-size:14.6px;color:#FFFFFF;letter-spacing:-0.024px">Trend</span>
<span class="t" style="left:339.26px;top:475.941px;height:20px;line-height:20px;font-size:14.6px;color:#FFFFFF;letter-spacing:1.012px">&amp;</span>
<span class="t" style="left:353.75px;top:475.941px;height:20px;line-height:20px;font-size:14.6px;color:#FFFFFF;letter-spacing:-0.373px">Reversal</span>
<span class="t" style="left:413.00px;top:475.941px;height:20px;line-height:20px;font-size:14.6px;color:#FFFFFF;letter-spacing:0.307px">Point</span>
<span class="t" style="left:550.75px;top:475.941px;height:20px;line-height:20px;font-size:14.6px;color:#FFFFFF;letter-spacing:-0.051px">Pivot</span>
<span class="t" style="left:588.00px;top:475.941px;height:20px;line-height:20px;font-size:14.6px;color:#FFFFFF;letter-spacing:0.182px">Point</span>
<span class="t" style="left:627.00px;top:475.941px;height:20px;line-height:20px;font-size:14.6px;color:#FFFFFF;letter-spacing:-0.089px">Analysis</span>
<span class="t" style="left:685.57px;top:475.941px;height:20px;line-height:20px;font-size:14.6px;color:#FFFFFF;letter-spacing:0.138px">-</span>
<span class="t" style="left:693.75px;top:475.941px;height:20px;line-height:20px;font-size:14.6px;color:#FFFFFF;letter-spacing:0.228px">Support</span>
<span class="t" style="left:751.38px;top:475.941px;height:20px;line-height:20px;font-size:14.6px;color:#FFFFFF;letter-spacing:0.262px">&amp;</span>
<span class="t" style="left:765.00px;top:475.941px;height:20px;line-height:20px;font-size:14.6px;color:#FFFFFF;letter-spacing:-0.303px">Resistance</span>
<span class="t" style="left:22.00px;top:507.541px;height:20px;line-height:20px;font-size:14.6px;color:#FFFFFF;letter-spacing:-0.295px">Domestic - NCDEX</span>
<span class="t" style="left:194.00px;top:507.541px;height:20px;line-height:20px;font-size:14.6px;color:#FFFFFF;letter-spacing:0.332px">Contract</span>
<span class="t" style="left:315.75px;top:507.541px;height:20px;line-height:20px;font-size:14.6px;color:#FFFFFF;letter-spacing:-0.458px">Close</span>
<span class="t" style="left:407.50px;top:507.541px;height:20px;line-height:20px;font-size:14.6px;color:#FFFFFF;letter-spacing:-0.024px">Trend</span>
<span class="t" style="left:497.44px;top:507.541px;height:20px;line-height:20px;font-size:14.6px;color:#FFFFFF;letter-spacing:-0.900px">RP</span>
<span class="t" style="left:579.90px;top:507.541px;height:20px;line-height:20px;font-size:14.6px;color:#FFFFFF;letter-spacing:-0.900px">S2</span>
<span class="t" style="left:661.15px;top:507.541px;height:20px;line-height:20px;font-size:14.6px;color:#FFFFFF;letter-spacing:-0.900px">S1</span>
<span class="t" style="left:733.90px;top:507.541px;height:20px;line-height:20px;font-size:14.6px;color:#FFFFFF;letter-spacing:-0.458px">Close</span>
<span class="t" style="left:824.12px;top:507.541px;height:20px;line-height:20px;font-size:14.6px;color:#FFFFFF;letter-spacing:-0.900px">R1</span>
<span class="t" style="left:905.50px;top:507.541px;height:20px;line-height:20px;font-size:14.6px;color:#FFFFFF;letter-spacing:-0.900px">R2</span>
<span class="t" style="left:995.23px;top:507.541px;height:20px;line-height:20px;font-size:14.6px;color:#FFFFFF;letter-spacing:-0.900px">RSI</span>
<div class="b" style="left:0px;top:72px;width:1200px;height:1px;background:rgba(0,0,0,0.82)"></div>
<div class="b" style="left:0px;top:73px;width:1200px;height:1px;background:rgba(0,0,8,0.92)"></div>
<div class="b" style="left:0px;top:529px;width:1200px;height:1px;background:rgba(0,0,0,0.75)"></div>
<div class="b" style="left:0px;top:530px;width:1200px;height:1px;background:rgba(0,0,8,0.9)"></div>
<div class="b" style="left:1056.4px;top:0px;width:1.9px;height:841px;background:#000"></div>
<div class="b" style="left:0px;top:0px;width:1.4px;height:842px;background:#000"></div>
<div class="b" style="left:1198px;top:0px;width:2px;height:842px;background:#000"></div>
<div class="b" style="left:1199px;top:74px;width:1px;height:392px;background:#6a6a6a"></div>
<div class="b" style="left:1199px;top:531px;width:1px;height:311px;background:#6a6a6a"></div>
<div class="b" style="left:0px;top:0px;width:1200px;height:1px;background:#050818"></div>
<div class="b" style="left:0px;top:840.7px;width:1200px;height:1.3px;background:#000"></div>
<div class="b" style="left:0px;top:842px;width:1200px;height:1px;background:#E6E6E6"></div>
<svg class="b" style="left:837px;top:2.5px" width="213" height="34" viewBox="0 0 213 34" preserveAspectRatio="none">
<rect x="0" y="0" width="213" height="34" fill="#fff"/>
<path d="M19.6 7.1L36.5 7L36 28.8L17.2 29.9Z" fill="#F89A1C"/>
<path d="M7.2 2.7H18.6Q19.4 2.7 19.4 3.6V25.6Q19.4 26.5 18.5 26.5H7.4Q6.4 26.5 6.4 25.5V3.6Q6.4 2.7 7.2 2.7Z" fill="#D9242C"/>
<g fill="none" stroke="#F58A3A" stroke-width="0.8" stroke-linecap="round">
<path d="M11.5 13.4V24M8 12.9L18 11M11.5 13.6L3 22M11.5 13.6L19.8 22"/>
<ellipse cx="11.5" cy="22.9" rx="9.1" ry="1.6"/>
</g>
<g fill="none" stroke="#E7621C" stroke-width="0.9" stroke-linejoin="round">
<path d="M26.8 9.8L21.6 16.2H33.8L26.8 9.8M27.4 10.2V16.2"/>
</g>
<text x="23" y="25.3" font-family="Liberation Sans, sans-serif" font-weight="bold" font-size="11.7" fill="#494261" stroke="#494261" stroke-width="0.4" textLength="93.7" lengthAdjust="spacingAndGlyphs">commodities</text>
<text x="116.9" y="25.3" font-family="Liberation Sans, sans-serif" font-weight="bold" font-size="11.7" fill="#F39A20" stroke="#F39A20" stroke-width="0.4" textLength="89.8" lengthAdjust="spacingAndGlyphs">control.com</text>
</svg>
<svg class="b" style="left:531.7px;top:239.3px" width="245.6" height="27.6" viewBox="0 0 213 34" preserveAspectRatio="none">
<rect x="0" y="0" width="213" height="34" fill="#fff"/>
<path d="M19.6 7.1L36.5 7L36 28.8L17.2 29.9Z" fill="#F89A1C"/>
<path d="M7.2 2.7H18.6Q19.4 2.7 19.4 3.6V25.6Q19.4 26.5 18.5 26.5H7.4Q6.4 26.5 6.4 25.5V3.6Q6.4 2.7 7.2 2.7Z" fill="#D9242C"/>
<g fill="none" stroke="#F58A3A" stroke-width="0.8" stroke-linecap="round">
<path d="M11.5 13.4V24M8 12.9L18 11M11.5 13.6L3 22M11.5 13.6L19.8 22"/>
<ellipse cx="11.5" cy="22.9" rx="9.1" ry="1.6"/>
</g>
<g fill="none" stroke="#E7621C" stroke-width="0.9" stroke-linejoin="round">
<path d="M26.8 9.8L21.6 16.2H33.8L26.8 9.8M27.4 10.2V16.2"/>
</g>
<text x="23" y="25.3" font-family="Liberation Sans, sans-serif" font-weight="bold" font-size="11.7" fill="#494261" stroke="#494261" stroke-width="0.4" textLength="93.7" lengthAdjust="spacingAndGlyphs">commodities</text>
<text x="116.9" y="25.3" font-family="Liberation Sans, sans-serif" font-weight="bold" font-size="11.7" fill="#F39A20" stroke="#F39A20" stroke-width="0.4" textLength="89.8" lengthAdjust="spacingAndGlyphs">control.com</text>
</svg>
<div class="b" style="left:2px;top:466px;width:235.5px;height:2px;background:#93A5C3"></div>
<svg class="b" style="left:2.3px;top:467.2px" width="235.2" height="32.6" viewBox="0 0 213 34" preserveAspectRatio="none">
<rect x="0" y="0" width="213" height="34" fill="#fff"/>
<path d="M19.6 7.1L36.5 7L36 28.8L17.2 29.9Z" fill="#F89A1C"/>
<path d="M7.2 2.7H18.6Q19.4 2.7 19.4 3.6V25.6Q19.4 26.5 18.5 26.5H7.4Q6.4 26.5 6.4 25.5V3.6Q6.4 2.7 7.2 2.7Z" fill="#D9242C"/>
<g fill="none" stroke="#F58A3A" stroke-width="0.8" stroke-linecap="round">
<path d="M11.5 13.4V24M8 12.9L18 11M11.5 13.6L3 22M11.5 13.6L19.8 22"/>
<ellipse cx="11.5" cy="22.9" rx="9.1" ry="1.6"/>
</g>
<g fill="none" stroke="#E7621C" stroke-width="0.9" stroke-linejoin="round">
<path d="M26.8 9.8L21.6 16.2H33.8L26.8 9.8M27.4 10.2V16.2"/>
</g>
<text x="23" y="25.3" font-family="Liberation Sans, sans-serif" font-weight="bold" font-size="11.7" fill="#494261" stroke="#494261" stroke-width="0.4" textLength="93.7" lengthAdjust="spacingAndGlyphs">commodities</text>
<text x="116.9" y="25.3" font-family="Liberation Sans, sans-serif" font-weight="bold" font-size="11.7" fill="#F39A20" stroke="#F39A20" stroke-width="0.4" textLength="89.8" lengthAdjust="spacingAndGlyphs">control.com</text>
</svg>
<svg class="b" style="left:836.7px;top:465.7px" width="219.6" height="31" viewBox="0 0 213 34" preserveAspectRatio="none">
<rect x="0" y="0" width="213" height="34" fill="#fff"/>
<path d="M19.6 7.1L36.5 7L36 28.8L17.2 29.9Z" fill="#F89A1C"/>
<path d="M7.2 2.7H18.6Q19.4 2.7 19.4 3.6V25.6Q19.4 26.5 18.5 26.5H7.4Q6.4 26.5 6.4 25.5V3.6Q6.4 2.7 7.2 2.7Z" fill="#D9242C"/>
<g fill="none" stroke="#F58A3A" stroke-width="0.8" stroke-linecap="round">
<path d="M11.5 13.4V24M8 12.9L18 11M11.5 13.6L3 22M11.5 13.6L19.8 22"/>
<ellipse cx="11.5" cy="22.9" rx="9.1" ry="1.6"/>
</g>
<g fill="none" stroke="#E7621C" stroke-width="0.9" stroke-linejoin="round">
<path d="M26.8 9.8L21.6 16.2H33.8L26.8 9.8M27.4 10.2V16.2"/>
</g>
<text x="23" y="25.3" font-family="Liberation Sans, sans-serif" font-weight="bold" font-size="11.7" fill="#494261" stroke="#494261" stroke-width="0.4" textLength="93.7" lengthAdjust="spacingAndGlyphs">commodities</text>
<text x="116.9" y="25.3" font-family="Liberation Sans, sans-serif" font-weight="bold" font-size="11.7" fill="#F39A20" stroke="#F39A20" stroke-width="0.4" textLength="89.8" lengthAdjust="spacingAndGlyphs">control.com</text>
</svg>
<svg class="b" style="left:537.5px;top:725.5px" width="246" height="30" viewBox="0 0 213 34" preserveAspectRatio="none">
<rect x="0" y="0" width="213" height="34" fill="#fff"/>
<path d="M19.6 7.1L36.5 7L36 28.8L17.2 29.9Z" fill="#F89A1C"/>
<path d="M7.2 2.7H18.6Q19.4 2.7 19.4 3.6V25.6Q19.4 26.5 18.5 26.5H7.4Q6.4 26.5 6.4 25.5V3.6Q6.4 2.7 7.2 2.7Z" fill="#D9242C"/>
<g fill="none" stroke="#F58A3A" stroke-width="0.8" stroke-linecap="round">
<path d="M11.5 13.4V24M8 12.9L18 11M11.5 13.6L3 22M11.5 13.6L19.8 22"/>
<ellipse cx="11.5" cy="22.9" rx="9.1" ry="1.6"/>
</g>
<g fill="none" stroke="#E7621C" stroke-width="0.9" stroke-linejoin="round">
<path d="M26.8 9.8L21.6 16.2H33.8L26.8 9.8M27.4 10.2V16.2"/>
</g>
<text x="23" y="25.3" font-family="Liberation Sans, sans-serif" font-weight="bold" font-size="11.7" fill="#494261" stroke="#494261" stroke-width="0.4" textLength="93.7" lengthAdjust="spacingAndGlyphs">commodities</text>
<text x="116.9" y="25.3" font-family="Liberation Sans, sans-serif" font-weight="bold" font-size="11.7" fill="#F39A20" stroke="#F39A20" stroke-width="0.4" textLength="89.8" lengthAdjust="spacingAndGlyphs">control.com</text>
</svg>
<div class="b" style="left:1056.4px;top:0px;width:1.9px;height:841px;background:#000"></div>
</body></html>
